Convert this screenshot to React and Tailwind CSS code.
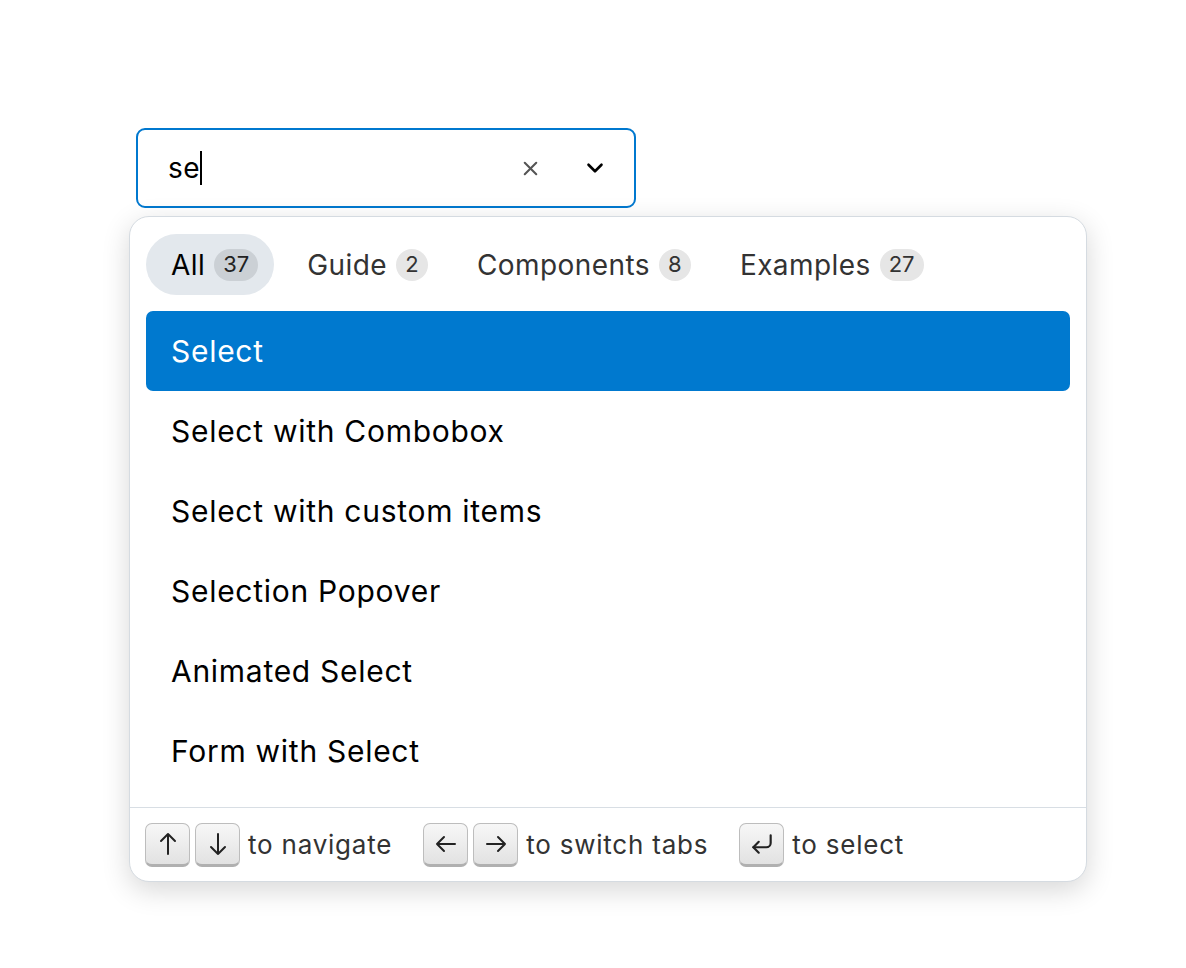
import { CornerDownLeft, X, ChevronDown } from "lucide-react";

const tabs = [
  { label: "All", count: 37, active: true },
  { label: "Guide", count: 2 },
  { label: "Components", count: 8 },
  { label: "Examples", count: 27 },
];

const items = [
  "Select",
  "Select with Combobox",
  "Select with custom items",
  "Selection Popover",
  "Animated Select",
  "Form with Select",
];

const Key = ({ children }) => (
  <span className="flex h-[44px] w-[45px] items-center justify-center rounded-[7px] border border-[#bdbdbd] border-b-[3px] border-b-[#b0b0b0] bg-gradient-to-b from-[#f7f7f7] to-[#e2e2e2] text-[#222]">
    {children}
  </span>
);

const VArrow = ({ down }) => (
  <svg width="24" height="24" viewBox="0 0 24 24" fill="none" stroke="currentColor" strokeWidth="2" strokeLinecap="round" strokeLinejoin="round" className={down ? "rotate-180" : ""}>
    <path d="M12 2v20M5 9l7-7 7 7" />
  </svg>
);

const HArrow = ({ right }) => (
  <svg width="24" height="24" viewBox="0 0 24 24" fill="none" stroke="currentColor" strokeWidth="2" strokeLinecap="round" strokeLinejoin="round" className={right ? "rotate-180" : ""}>
    <path d="M3 12h18M10 5l-7 7 7 7" />
  </svg>
);

export default function App() {
  return (
    <div className="min-h-screen bg-white pt-[128px] pl-[129px] font-['Inter',sans-serif] tracking-[0.026em]">
      {/* Combobox input */}
      <div className="ml-[7px] flex h-[80px] w-[500px] items-center rounded-[9px] border-2 border-[#0078cf] bg-white pl-[30px] pr-[26px]">
        <div className="flex flex-1 items-center text-[28px] text-black">
          se
          <span className="h-[34px] w-[2px] bg-black" />
        </div>
        <X size={23} strokeWidth={2.2} className="mr-[40px] text-[#555]" />
        <ChevronDown size={26} strokeWidth={2.4} className="text-black" />
      </div>

      {/* Popover */}
      <div className="mt-[8px] w-[958px] overflow-hidden rounded-[20px] border border-[#d5dbe1] bg-white shadow-[0_8px_28px_rgba(0,0,0,0.16)]">
        <div className="px-[16px] pt-[17px] pb-[16px]">
          {/* Tabs */}
          <div className="flex gap-[8px]">
            {tabs.map((t) => (
              <div
                key={t.label}
                className={`flex h-[61px] items-center gap-[9px] rounded-full pl-[25px] pr-[16px] text-[28px] ${
                  t.active ? "bg-[#e3e8ed] text-black" : "text-[#333]"
                }`}
              >
                <span>{t.label}</span>
                <span
                  className={`flex h-[32px] min-w-[32px] items-center justify-center rounded-full px-[9px] text-[22px] tracking-normal ${
                    t.active ? "bg-[#cbd0d5] text-[#222]" : "bg-[#e6e6e6] text-[#333]"
                  }`}
                >
                  {t.count}
                </span>
              </div>
            ))}
          </div>

          {/* Items */}
          <div className="mt-[16px] flex flex-col tracking-[0.045em]">
            {items.map((item, i) => (
              <div
                key={item}
                className={`flex h-[80px] items-center rounded-[7px] px-[25px] text-[30px] ${
                  i === 0 ? "bg-[#0079cf] text-white" : "text-black"
                }`}
              >
                {item}
              </div>
            ))}
          </div>
        </div>

        {/* Footer */}
        <div className="flex h-[74px] items-center border-t border-[#d8dee4] px-[15px] text-[26px] tracking-[0.03em] text-[#333]">
          <div className="flex items-center gap-[5px]">
            <Key><VArrow /></Key>
            <Key><VArrow down /></Key>
            <span className="ml-[3px]">to navigate</span>
          </div>
          <div className="ml-[31px] flex items-center gap-[5px]">
            <Key><HArrow /></Key>
            <Key><HArrow right /></Key>
            <span className="ml-[3px]">to switch tabs</span>
          </div>
          <div className="ml-[31px] flex items-center gap-[5px]">
            <Key><CornerDownLeft size={26} strokeWidth={2} /></Key>
            <span className="ml-[3px]">to select</span>
          </div>
        </div>
      </div>
    </div>
  );
}
